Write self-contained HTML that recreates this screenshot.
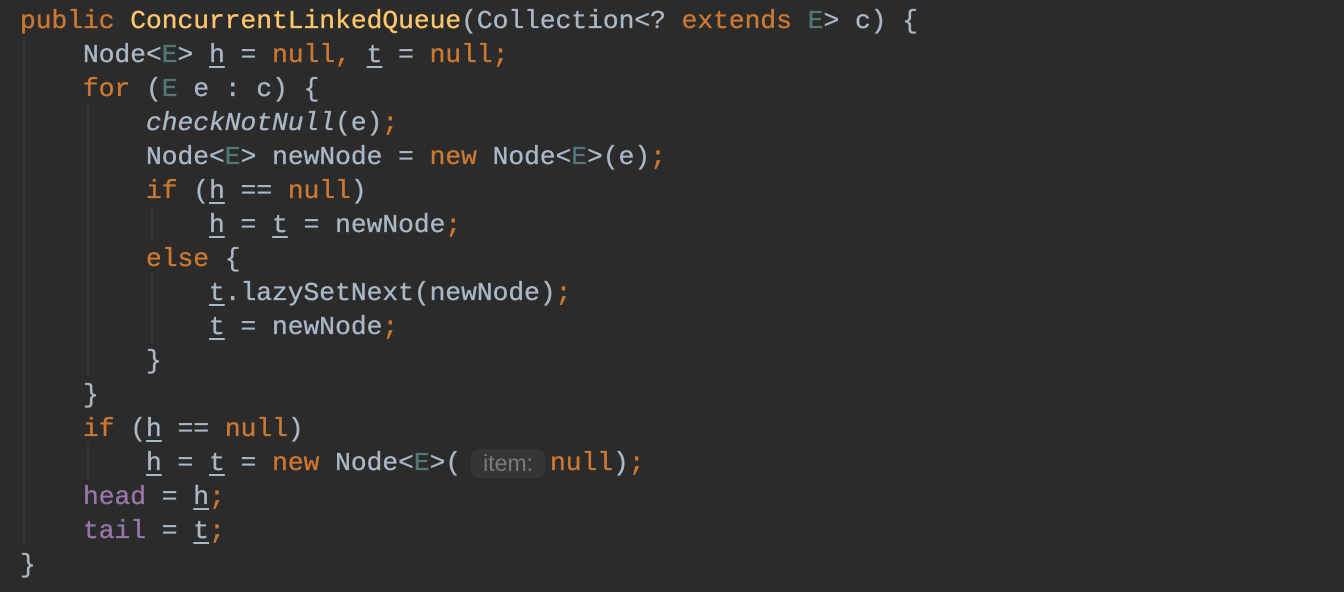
<!DOCTYPE html>
<html><head><meta charset="utf-8"><style>
html,body{margin:0;padding:0;background:#2b2b2b;width:1344px;height:592px;overflow:hidden}
pre{position:absolute;left:20px;top:4px;margin:0;font-family:"Liberation Mono",monospace;font-size:26.25px;line-height:34px;color:#a9b7c6;white-space:pre;-webkit-text-stroke:0.35px}
.k{color:#cc7832}.m{color:#ffc66d}.g{color:#507874}.f{color:#9876aa}.i{font-style:italic}
.u{text-decoration:underline;text-underline-offset:4px;text-decoration-thickness:2px}
.h{display:inline-block;font-family:"Liberation Sans",sans-serif;font-size:23px;color:#7a7a7a;background:#353535;border-radius:7px;padding:0 12px;margin:0 5px 0 10px;line-height:29px;vertical-align:-1px;-webkit-text-stroke:0}
.gd{position:absolute;width:2px;background:#363636}
</style></head><body>
<div class="gd" style="left:23px;top:36px;height:510px"></div>
<div class="gd" style="left:87px;top:104px;height:272px"></div>
<div class="gd" style="left:87px;top:444px;height:34px"></div>
<div class="gd" style="left:151px;top:206px;height:34px"></div>
<div class="gd" style="left:151px;top:274px;height:68px"></div>
<pre><span class="k">public </span><span class="m">ConcurrentLinkedQueue</span>(Collection&lt;? <span class="k">extends </span><span class="g">E</span>&gt; c) {
    Node&lt;<span class="g">E</span>&gt; <span class="u">h</span> = <span class="k">null, </span><span class="u">t</span> = <span class="k">null;</span>
    <span class="k">for </span>(<span class="g">E</span> e : c) {
        <span class="i">checkNotNull</span>(e)<span class="k">;</span>
        Node&lt;<span class="g">E</span>&gt; newNode = <span class="k">new </span>Node&lt;<span class="g">E</span>&gt;(e)<span class="k">;</span>
        <span class="k">if </span>(<span class="u">h</span> == <span class="k">null</span>)
            <span class="u">h</span> = <span class="u">t</span> = newNode<span class="k">;</span>
        <span class="k">else </span>{
            <span class="u">t</span>.lazySetNext(newNode)<span class="k">;</span>
            <span class="u">t</span> = newNode<span class="k">;</span>
        }
    }
    <span class="k">if </span>(<span class="u">h</span> == <span class="k">null</span>)
        <span class="u">h</span> = <span class="u">t</span> = <span class="k">new </span>Node&lt;<span class="g">E</span>&gt;(<span class="h">item:</span><span class="k">null</span>)<span class="k">;</span>
    <span class="f">head</span> = <span class="u">h</span><span class="k">;</span>
    <span class="f">tail</span> = <span class="u">t</span><span class="k">;</span>
}</pre>
</body></html>
